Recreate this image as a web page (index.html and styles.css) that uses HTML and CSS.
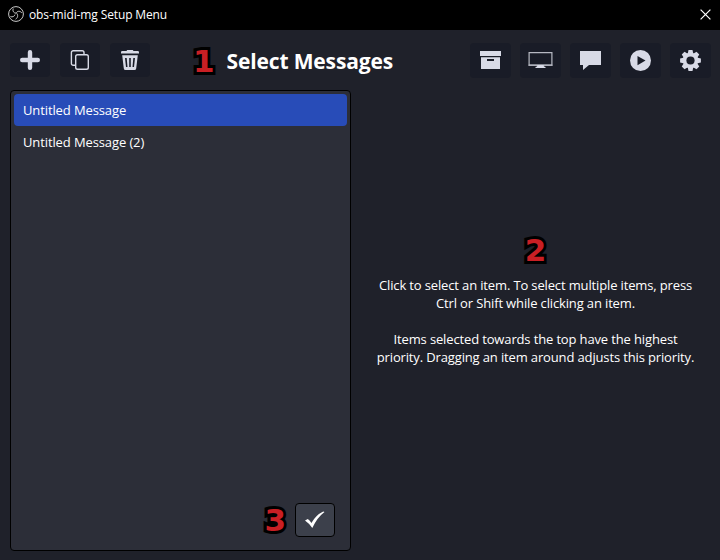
FILE: index.html
```
<!DOCTYPE html>
<html lang="en">
<head>
<meta charset="utf-8">
<title>obs-midi-mg Setup Menu</title>
<link rel="stylesheet" href="styles.css">
</head>
<body>
<div class="window">
  <header class="titlebar">
    <svg class="logo" width="16" height="16" viewBox="0 0 16 16" fill="none" stroke="#c8c8c8" stroke-width="1">
      <circle cx="8" cy="8" r="7.400"/>
      <path d="M5.200 2.500C4.300 5 5.600 7 8 7.200M8 7.200C9 5.200 11.500 4.300 13.800 6.800M8.600 7.200C10.400 9.200 9.800 11.800 7.600 13.200M2.400 10.600C4.500 11.400 6.400 10.400 7 8.600"/>
    </svg>
    <span class="caption">obs-midi-mg Setup Menu</span>
    <svg class="close" width="11" height="11" viewBox="0 0 11 11" stroke="#fff" stroke-width="1.2"><path d="M.6.6l9.800 9.800M10.400.6L.6 10.400"/></svg>
  </header>
  <div class="toolbar">
    <div class="group">
      <button class="tool" aria-label="Add"><svg width="20" height="20" viewBox="0 0 20 20" stroke="#d8dae6" stroke-width="4.400" stroke-linecap="round"><path d="M10 2.200v15.600M2.200 10h15.600"/></svg></button>
      <button class="tool" aria-label="Copy"><svg width="20" height="20" viewBox="0 0 20 20" fill="none" stroke="#d8dae6" stroke-width="1.400"><rect x="5.700" y="4.700" width="12.600" height="14.600" rx="1.800"/><path d="M5.500 15.300H3.200a1.800 1.800 0 0 1-1.800-1.800V2.500A1.800 1.800 0 0 1 3.200.7h9a1.800 1.800 0 0 1 1.800 1.800v2"/></svg></button>
      <button class="tool" aria-label="Delete"><svg width="20" height="20" viewBox="0 0 20 20" fill="#d8dae6"><path d="M1 2.200Q1 1 2.200 1H6.500L7.200 0h5.600l.7 1h4.300Q19 1 19 2.200V3.600H1z"/><path fill-rule="evenodd" d="M2.200 5.200h15.600l-1.600 13.300Q16 20 14.500 20h-9Q4 20 3.800 18.500zM5 8l1 9h1.500L6.700 8zM9.200 8v9h1.600V8zM13.300 8l-.8 9H14l1-9z"/></svg></button>
    </div>
    <div class="heading"><span class="mark">1</span><h1>Select Messages</h1></div>
    <div class="group wide">
      <button class="tool" aria-label="Collection"><svg width="21" height="18" viewBox="0 0 21 18" fill="#d8dae6"><path d="M0 0h21v5H0z"/><path fill-rule="evenodd" d="M1 6.200h19V18H1zM7 8v2h7V8z"/></svg></button>
      <button class="tool" aria-label="Display"><svg class="display" width="25" height="16" viewBox="0 0 25 16"><path d="M1.100.6h22.800v12.600H1.100z" fill="none" stroke="#b6b8c2" stroke-width="1.200"/><path d="M.5 12.600h24v1.200H.5z" fill="#b6b8c2"/><path d="M9.500 13h6l.5 1.500 1.500.5v1h-10v-1l1.500-.5z" fill="#d8dae6"/></svg></button>
      <button class="tool" aria-label="Message"><svg width="21" height="20" viewBox="0 0 21 20" fill="#d8dae6"><path d="M0 1h21v14H9L3 20v-5H0z"/></svg></button>
      <button class="tool" aria-label="Play"><svg width="21" height="21" viewBox="0 0 21 21"><circle cx="10.500" cy="10.500" r="10.500" fill="#d8dae6"/><path d="M7.500 6v9.200l8-4.600z" fill="#191c27"/></svg></button>
      <button class="tool" aria-label="Settings"><svg width="21" height="21" viewBox="-10.500 -10.500 21 21"><g fill="#d8dae6"><path id="cog" d="M-2.700-7.200-2-10.400h4l.7 3.200v14.400L2 10.400h-4l-.7-3.200z"/><use href="#cog" transform="rotate(45)"/><use href="#cog" transform="rotate(90)"/><use href="#cog" transform="rotate(135)"/><circle r="7.800"/></g><circle r="4.100" fill="#191c27"/></svg></button>
    </div>
  </div>
  <main class="content">
    <section class="list">
      <div class="item selected">Untitled Message</div>
      <div class="item">Untitled Message (2)</div>
      <div class="confirm">
        <span class="mark">3</span>
        <button class="check" aria-label="Confirm"><svg width="20" height="18" viewBox="0 0 20 18"><path d="M0 9.500 2.800 8q2.200 1.400 3.600 3.900Q11 4 18.200.5L19.500.9Q12 6.500 7.300 17 4.500 12.600 0 9.500z" fill="#fff"/></svg></button>
      </div>
    </section>
    <section class="help">
      <span class="mark">2</span>
      <p>Click to select an item. To select multiple items, press<br>Ctrl or Shift while clicking an item.</p>
      <p>Items selected towards the top have the highest<br>priority. Dragging an item around adjusts this priority.</p>
    </section>
  </main>
</div>
</body>
</html>
```
FILE: styles.css
```
* { box-sizing: border-box; }
body { margin: 0; }
.window {
  width: 720px;
  height: 560px;
  display: flex;
  flex-direction: column;
  overflow: hidden;
  background: #1f212a;
  color: #fff;
  font: 13px/18px "Open Sans", "Noto Sans", sans-serif;
}
svg { display: block; }
.titlebar {
  height: 30px;
  flex: none;
  display: flex;
  align-items: center;
  padding: 0 9px 2px 8px;
  background: #000;
}
.caption { flex: 1; margin-left: 5px; padding-top: 2px; font-size: 12px; letter-spacing: -0.13px; }
.toolbar {
  height: 60px;
  flex: none;
  display: flex;
  align-items: center;
  padding: 0 9px 0 10px;
}
.group { display: flex; gap: 10px; }
.wide { gap: 9px; }
button { padding: 0; display: flex; align-items: center; justify-content: center; }
.tool {
  width: 40px;
  height: 34px;
  border: 0;
  border-radius: 4px;
  background: #191c27;
}
.wide .tool { width: 41px; height: 35px; }
.heading { flex: 1; display: flex; align-items: center; padding: 1px 0 0 43px; }
h1 {
  margin: 0 0 0 12px;
  font-size: 21px;
  line-height: 28px;
  letter-spacing: -0.15px;
  white-space: nowrap;
}
.mark {
  font: bold 31px/30px "DejaVu Sans", sans-serif;
  color: #c91f24;
  -webkit-text-stroke: 6px #000;
  paint-order: stroke fill;
}
.content { flex: 1; display: flex; padding: 0 0 9px 10px; }
.list {
  width: 341px;
  display: flex;
  flex-direction: column;
  padding: 3px;
  border: 1px solid #000;
  border-radius: 4px;
  background: #2c2e38;
}
.item { height: 32px; padding: 0 9px; line-height: 32px; border-radius: 4px; letter-spacing: -0.11px; }
.selected { background: #284cb8; }
.confirm {
  display: flex;
  align-items: center;
  justify-content: flex-end;
  gap: 9px;
  margin: auto 12px 10px 0;
}
.check {
  width: 40px;
  height: 34px;
  border: 1px solid #000;
  border-radius: 4px;
  background: #3c404b;
}
.help {
  flex: 1;
  display: flex;
  flex-direction: column;
  align-items: center;
  padding: 145px 0 0 0;
  text-align: center;
}
.help p { margin: 0 0 18px; white-space: nowrap; letter-spacing: -0.14px; }
.help .mark { margin-bottom: 11px; }
```
